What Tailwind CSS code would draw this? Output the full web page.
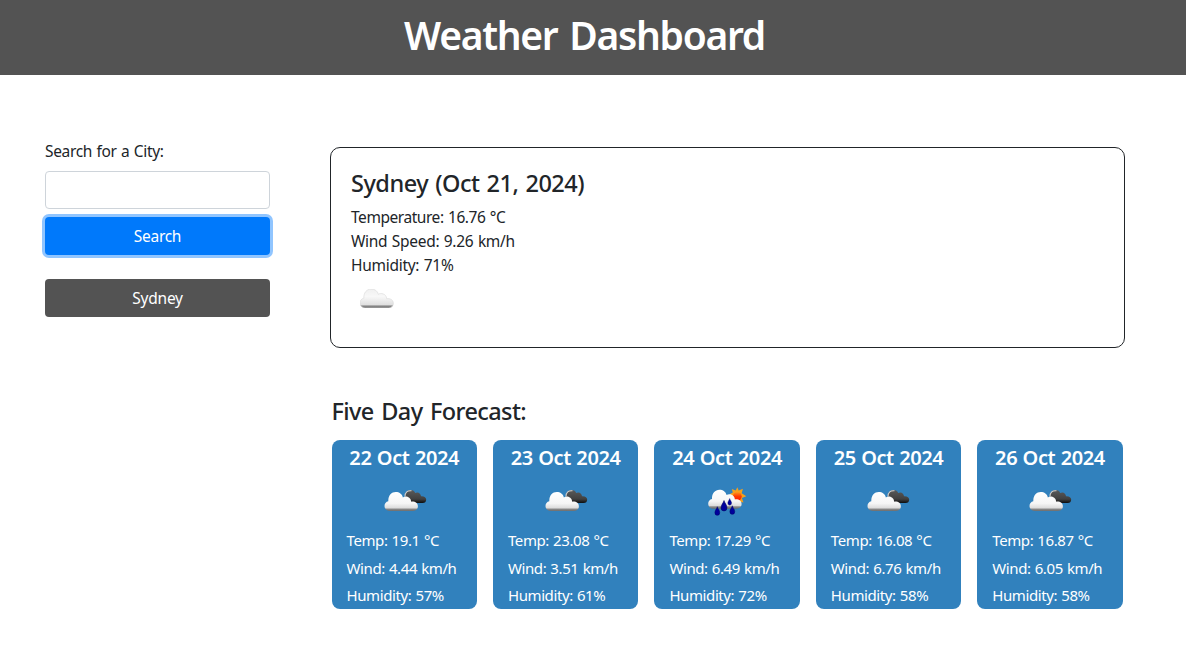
<!DOCTYPE html>
<html lang="en">
<head>
<meta charset="utf-8">
<title>Weather Dashboard</title>
<script src="https://cdn.jsdelivr.net/npm/@tailwindcss/browser@4"></script>
</head>
<body class="bg-white font-['Noto_Sans',sans-serif] text-base text-[#212529]">
<svg class="absolute h-0 w-0">
  <defs>
    <linearGradient id="white" x1="0" y1="0" x2="0" y2="1"><stop offset="0" stop-color="#fff"/><stop offset=".6" stop-color="#f6f6f6"/><stop offset=".84" stop-color="#dcdcdc"/><stop offset=".9" stop-color="#8a8a8a"/><stop offset="1" stop-color="#6c6c6c"/></linearGradient>
    <linearGradient id="pale" x1="0" y1="0" x2="0" y2="1"><stop offset="0" stop-color="#f0f0f0"/><stop offset=".4" stop-color="#f8f8f8"/><stop offset=".82" stop-color="#e0e0e0"/><stop offset=".9" stop-color="#8a8a8a"/><stop offset="1" stop-color="#707070"/></linearGradient>
    <linearGradient id="dark" x1="0" y1="0" x2="0" y2="1"><stop offset="0" stop-color="#5a5a5a"/><stop offset=".7" stop-color="#404040"/><stop offset="1" stop-color="#0c0c0c"/></linearGradient>
    <linearGradient id="sun" x1="0" y1="0" x2="0" y2="1"><stop offset="0" stop-color="#ff9a20"/><stop offset=".5" stop-color="#ff3a00"/><stop offset="1" stop-color="#ff1a00"/></linearGradient>
    <path id="cloud" d="M5.500 19C2.500 19 0 17 0 14C0 11.500 1.500 9.700 3.800 9.200C3.600 3.500 7 0 11.200 0C14.800 0 17.600 2 18.400 5.400C20.500 3.600 26.400 4.600 26.700 9.700C30.500 9.200 33.400 11.200 33.400 14.400C33.400 17.200 31 19 28.300 19Z"/>
    <path id="drop" d="M0-5C.6-2.800 2.700-.8 2.700 1.600A2.700 2.900 0 0 1-2.700 1.600C-2.700-.8-.6-2.800 0-5Z"/>
    <symbol id="broken" viewBox="0 0 50 30">
      <path d="M25 11C24.500 7 27 4 30.500 4C33 4 34.500 5.300 35.200 7C38 5.300 41 7.500 41 10.300C44 10 46.200 11.600 46.200 13.700C46.200 15.700 44.800 17 42.500 17H30Z" fill="url(#dark)"/>
      <path d="M25 10.500C25 6.500 27.500 4.200 31.500 4.800" fill="none" stroke="#cfcfcf" stroke-width="1.100"/>
      <use href="#cloud" x="4.500" y="6" fill="url(#white)"/>
    </symbol>
    <symbol id="rain" viewBox="0 0 50 30">
      <path d="M35.300 1.300L36.700 4.600L40.900 2.700L39.700 7.200L44.300 10.300L39.900 12L41.500 16.500L37 15.500L35.300 19L30 15L28 8L30.800 6.600L29.800 3L33.700 4.600Z" fill="#f6a01c"/>
      <circle cx="35.300" cy="10.300" r="4.400" fill="url(#sun)"/>
      <use href="#cloud" x="6.200" y="3.700" fill="url(#white)"/>
      <g fill="#00009c" stroke="#000060" stroke-width=".5"><use href="#drop" transform="translate(15.300 25.200) scale(.9)"/><use href="#drop" transform="translate(22 20) scale(1.100)"/><use href="#drop" transform="translate(27.700 16) scale(.7)"/><use href="#drop" transform="translate(30.300 24.200) scale(.9)"/></g>
    </symbol>
  </defs>
</svg>

<header class="h-[75px] bg-[#535353] pr-[17px] text-center">
  <h1 class="pt-2 text-[39px] leading-[53px] font-semibold tracking-[-1.300px] text-white [word-spacing:3px]">Weather Dashboard</h1>
</header>

<main class="flex items-start pl-[45px] pt-16">
  <aside class="flex w-[225px] shrink-0 flex-col">
    <label for="city" class="text-[15.500px] leading-6 tracking-[-0.350px] [word-spacing:0.800px]">Search for a City:</label>
    <input id="city" type="text" class="mt-2 h-[38px] rounded border border-[#ced4da] bg-white px-3">
    <button class="mt-2 h-[38px] rounded bg-[#0079fb] pt-0.5 text-[15.500px] tracking-[-0.300px] text-white ring-3 ring-[#90c5ff]">Search</button>
    <button class="mt-6 h-[38px] rounded bg-[#535353] pt-0.5 text-[15.500px] tracking-[-0.200px] text-white">Sydney</button>
  </aside>

  <div class="ml-[60px] w-[795px] pt-2">
    <section class="h-[201px] rounded-[10px] border border-[#212529] px-5 pt-5">
      <h2 class="text-[23.500px] leading-[31px] font-medium tracking-[-0.500px] [word-spacing:1.500px]">Sydney (Oct 21, 2024)</h2>
      <div class="mt-1.5 text-[15.500px] leading-6 [word-spacing:0.800px]">
        <p class="tracking-[-0.450px]">Temperature: 16.76 °C</p>
        <p class="tracking-[-0.300px]">Wind Speed: 9.26 km/h</p>
        <p class="tracking-[-0.280px]">Humidity: 71%</p>
      </div>
      <svg class="ml-[9px] mt-3 h-[19px] w-[34px]" viewBox="0 0 34 19"><use href="#cloud" fill="url(#pale)" stroke="#d8d8d8" stroke-width=".6"/></svg>
    </section>

    <section class="pl-[1.500px] pr-[2.300px] pt-12">
      <h2 class="text-[23.500px] leading-[31px] font-medium tracking-[-0.600px] [word-spacing:2px]">Five Day Forecast:</h2>
      <div class="mt-[13px] grid grid-cols-5 gap-4 text-[15px] tracking-[-0.400px] text-white [word-spacing:0.600px]">
        <article class="h-[169px] rounded-lg bg-[#3181bd] pl-[15px]">
          <h3 class="-ml-[15px] pt-1.5 text-center text-xl leading-6 font-semibold">22 Oct 2024</h3>
          <svg class="ml-[33px] mt-4 h-[30px] w-[50px]"><use href="#broken"/></svg>
          <div class="mt-[11px] leading-[27.500px]"><p>Temp: 19.1 °C</p><p>Wind: 4.44 km/h</p><p>Humidity: 57%</p></div>
        </article>
        <article class="h-[169px] rounded-lg bg-[#3181bd] pl-[15px]">
          <h3 class="-ml-[15px] pt-1.5 text-center text-xl leading-6 font-semibold">23 Oct 2024</h3>
          <svg class="ml-[33px] mt-4 h-[30px] w-[50px]"><use href="#broken"/></svg>
          <div class="mt-[11px] leading-[27.500px]"><p>Temp: 23.08 °C</p><p>Wind: 3.51 km/h</p><p>Humidity: 61%</p></div>
        </article>
        <article class="h-[169px] rounded-lg bg-[#3181bd] pl-[15px]">
          <h3 class="-ml-[15px] pt-1.5 text-center text-xl leading-6 font-semibold">24 Oct 2024</h3>
          <svg class="ml-[33px] mt-4 h-[30px] w-[50px]"><use href="#rain"/></svg>
          <div class="mt-[11px] leading-[27.500px]"><p>Temp: 17.29 °C</p><p>Wind: 6.49 km/h</p><p>Humidity: 72%</p></div>
        </article>
        <article class="h-[169px] rounded-lg bg-[#3181bd] pl-[15px]">
          <h3 class="-ml-[15px] pt-1.5 text-center text-xl leading-6 font-semibold">25 Oct 2024</h3>
          <svg class="ml-[32.500px] mt-4 h-[30px] w-[50px]"><use href="#broken"/></svg>
          <div class="mt-[11px] leading-[27.500px]"><p>Temp: 16.08 °C</p><p>Wind: 6.76 km/h</p><p>Humidity: 58%</p></div>
        </article>
        <article class="h-[169px] rounded-lg bg-[#3181bd] pl-[15px]">
          <h3 class="-ml-[15px] pt-1.5 text-center text-xl leading-6 font-semibold">26 Oct 2024</h3>
          <svg class="ml-[33px] mt-4 h-[30px] w-[50px]"><use href="#broken"/></svg>
          <div class="mt-[11px] leading-[27.500px]"><p>Temp: 16.87 °C</p><p>Wind: 6.05 km/h</p><p>Humidity: 58%</p></div>
        </article>
      </div>
    </section>
  </div>
</main>
</body>
</html>
